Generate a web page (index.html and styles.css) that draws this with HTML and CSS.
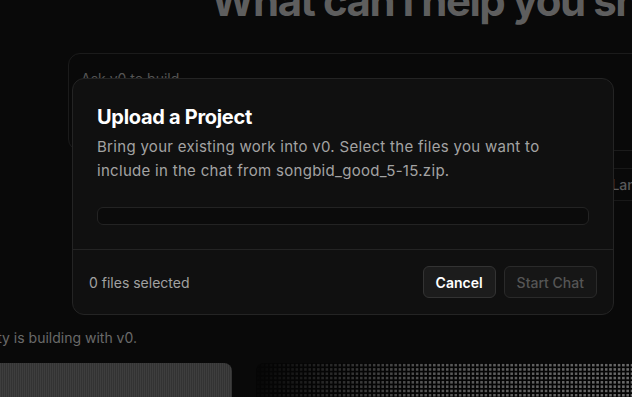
FILE: index.html
```html
<!DOCTYPE html>
<html lang="en">
<head>
    <meta charset="UTF-8">
    <meta name="viewport" content="width=device-width, initial-scale=1.0">
    <title>v0</title>
    <link rel="stylesheet" href="styles.css">
</head>
<body>

    <main class="page">
        <h1 class="hero-title">What can I help you ship?</h1>

        <!-- prompt box -->
        <div class="prompt">
            <span class="prompt-placeholder">Ask v0 to build...</span>
        </div>

        <div class="chips">
            <span class="chip">Clone a Screenshot</span>
            <span class="chip">Import from Figma</span>
            <span class="chip">Upload a Project</span>
            <span class="chip">Landing Page</span>
        </div>

        <div class="community">
            <p>See what the community is building with v0.</p>
        </div>

        <div class="cards">
            <div class="card card-stripes"></div>
            <div class="card card-dots"></div>
        </div>
    </main>

    <!-- upload dialog -->
    <div class="overlay">
        <div class="modal">
            <div class="modal-body">
                <h2>Upload a Project</h2>
                <p>Bring your existing work into v0. Select the files you want to include in the chat from songbid_good_5-15.zip.</p>
                <div class="file-list"></div>
            </div>
            <div class="modal-footer">
                <span class="selected-count">0 files selected</span>
                <div class="actions">
                    <button class="btn btn-cancel">Cancel</button>
                    <button class="btn btn-start" disabled>Start Chat</button>
                </div>
            </div>
        </div>
    </div>

</body>
</html>
```

FILE: styles.css
```css
body {
    margin: 0;
    background-color: #090909;
    font-family: Inter, "Noto Sans", sans-serif;
    overflow: hidden;
    height: 397px;
}

.page {
    width: 632px;
}

.hero-title {
    margin: -24px 0 0 0;
    padding-left: 211px;
    font-size: 42px;
    line-height: 50px;
    font-weight: 700;
    letter-spacing: -1.5px;
    color: #5e5e5e;
    white-space: nowrap;
}

.prompt {
    margin: 27px 0 0 68px;
    width: 640px;
    height: 98px;
    border: 1px solid #1b1b1b;
    border-radius: 12px;
    padding: 14px 12px;
    box-sizing: border-box;
}

.prompt-placeholder {
    font-size: 14px;
    color: #555;
}

.chips {
    display: flex;
    gap: 18px;
    margin: 17px 0 0 74px;
    white-space: nowrap;
}

.chip {
    flex-shrink: 0;
    height: 33px;
    line-height: 31px;
    padding: 0 16px;
    box-sizing: border-box;
    border: 1px solid #181818;
    border-radius: 16px;
    font-size: 14px;
    font-weight: 500;
    color: #5a5a5a;
}

.community {
    display: flex;
    justify-content: flex-end;
    width: 137px;
    margin-top: 127px;
    white-space: nowrap;
}

.community p {
    margin: 0;
    font-size: 14px;
    line-height: 20px;
    color: #6a6a6a;
}

.cards {
    display: flex;
    gap: 24px;
    margin-top: 15px;
}

.card {
    flex-shrink: 0;
    height: 48px;
    border-radius: 8px;
}

.card-stripes {
    width: 232px;
    border-top-left-radius: 0;
    background-color: #383838;
    background-image: repeating-linear-gradient(90deg, #3e3e3e 0, #3e3e3e 1px, #333 1px, #333 2px);
}

.card-dots {
    width: 376px;
    border-top-right-radius: 0;
    background-color: #050505;
    background-image:
        linear-gradient(100deg, rgba(5, 5, 5, 1) 0%, rgba(5, 5, 5, 0.2) 45%, rgba(5, 5, 5, 0) 100%),
        radial-gradient(circle, #6a6a6a 1.2px, transparent 1.4px);
    background-size: 100% 100%, 4.3px 4.3px;
}

/* dialog */
.overlay {
    position: fixed;
    inset: 0;
    padding: 78px 0 0 72px;
}

.modal {
    width: 542px;
    background-color: #101010;
    border: 1px solid #242424;
    border-radius: 12px;
    box-sizing: border-box;
}

.modal-body {
    padding: 24px;
}

.modal-body h2 {
    margin: 0;
    font-size: 20px;
    line-height: 28px;
    font-weight: 700;
    letter-spacing: -0.3px;
    color: #fff;
}

.modal-body p {
    margin: 4px 0 0 0;
    font-size: 15px;
    line-height: 24px;
    letter-spacing: 0.3px;
    color: #a3a3a3;
}

.file-list {
    margin-top: 24px;
    height: 18px;
    border: 1px solid #232323;
    border-radius: 6px;
    background-color: #0b0b0b;
    box-sizing: border-box;
}

.modal-footer {
    display: flex;
    justify-content: space-between;
    align-items: center;
    padding: 16px;
    border-top: 1px solid #242424;
}

.selected-count {
    font-size: 14px;
    color: #a1a1a1;
}

.actions {
    display: flex;
    gap: 8px;
}

.btn {
    height: 32px;
    padding: 0 12px;
    border-radius: 6px;
    font-family: inherit;
    font-size: 14px;
    cursor: pointer;
}

.btn-cancel {
    background-color: #1c1c1c;
    border: 1px solid #333;
    color: #fff;
    font-weight: 600;
}

.btn-start {
    background-color: #161616;
    border: 1px solid #2a2a2a;
    color: #555;
    font-weight: 500;
}
```
